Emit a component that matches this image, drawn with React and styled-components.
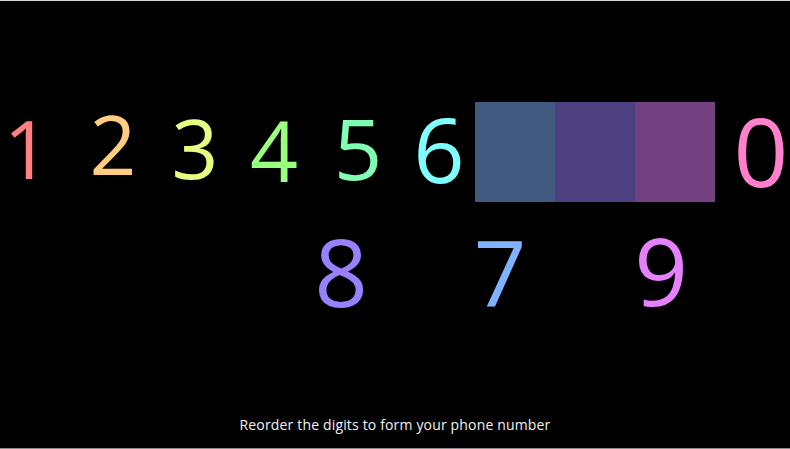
import React from 'react';
import styled, { createGlobalStyle } from 'styled-components';

const GlobalStyle = createGlobalStyle`
    html, body {
        margin: 0;
        padding: 0;
        background: black;
    }
    body {
        font-family: "Open Sans", "DejaVu Sans", sans-serif;
    }
`;

const Screen = styled.div`
    display: flex;
    flex-direction: column;
    width: 790px;
    height: 449px;
    box-sizing: border-box;
    background: black;
    border-top: 1px solid #d8d8d8;
    border-bottom: 1px solid #8c8c8c;
    overflow: hidden;
`;

const Board = styled.div`
    position: relative;
    flex: 1;
`;

const Slots = styled.div`
    position: absolute;
    left: 475px;
    top: 101px;
    display: flex;
`;

const Slot = styled.div`
    width: 80px;
    height: 100px;
    background: hsla(${props => props.hue}, 100%, 75%, 0.5);
`;

const Digit = styled.div`
    position: absolute;
    width: 100px;
    text-align: center;
    line-height: 1;
    font-size: ${props => props.size}px;
    color: hsl(${props => props.hue}, 100%, 75%);
    user-select: none;
`;

const Caption = styled.div`
    padding: 0 0 13px;
    text-align: center;
    color: #f2f2f2;
    font-size: 14px;
    letter-spacing: 0.16px;
    line-height: 20px;
`;

// x = glyph centre, y = baseline, in page pixels
const digits = [
    {d: '1', hue: 0, x: 27, y: 179, size: 81},
    {d: '2', hue: 36, x: 113, y: 175, size: 82},
    {d: '3', hue: 72, x: 195, y: 179, size: 82},
    {d: '4', hue: 108, x: 274, y: 183, size: 84},
    {d: '5', hue: 144, x: 358, y: 180, size: 85},
    {d: '6', hue: 180, x: 439, y: 183, size: 90},
    {d: '0', hue: 324, x: 761, y: 187, size: 96},
    {d: '8', hue: 252, x: 341, y: 307, size: 94},
    {d: '7', hue: 216, x: 500, y: 308, size: 92},
    {d: '9', hue: 288, x: 661, y: 306, size: 94},
];

const slotHues = [216, 252, 288];

export default function App() {
    return (
        <>
            <GlobalStyle />
            <Screen>
                <Board>
                    <Slots>
                        {slotHues.map(h => <Slot key={h} hue={h} />)}
                    </Slots>
                    {digits.map(n => (
                        <Digit
                            key={n.d}
                            hue={n.hue}
                            size={n.size}
                            style={{left: n.x - 50, top: n.y - 1 - 0.888 * n.size}}
                        >
                            {n.d}
                        </Digit>
                    ))}
                </Board>
                <Caption>Reorder the digits to form your phone number</Caption>
            </Screen>
        </>
    );
}
